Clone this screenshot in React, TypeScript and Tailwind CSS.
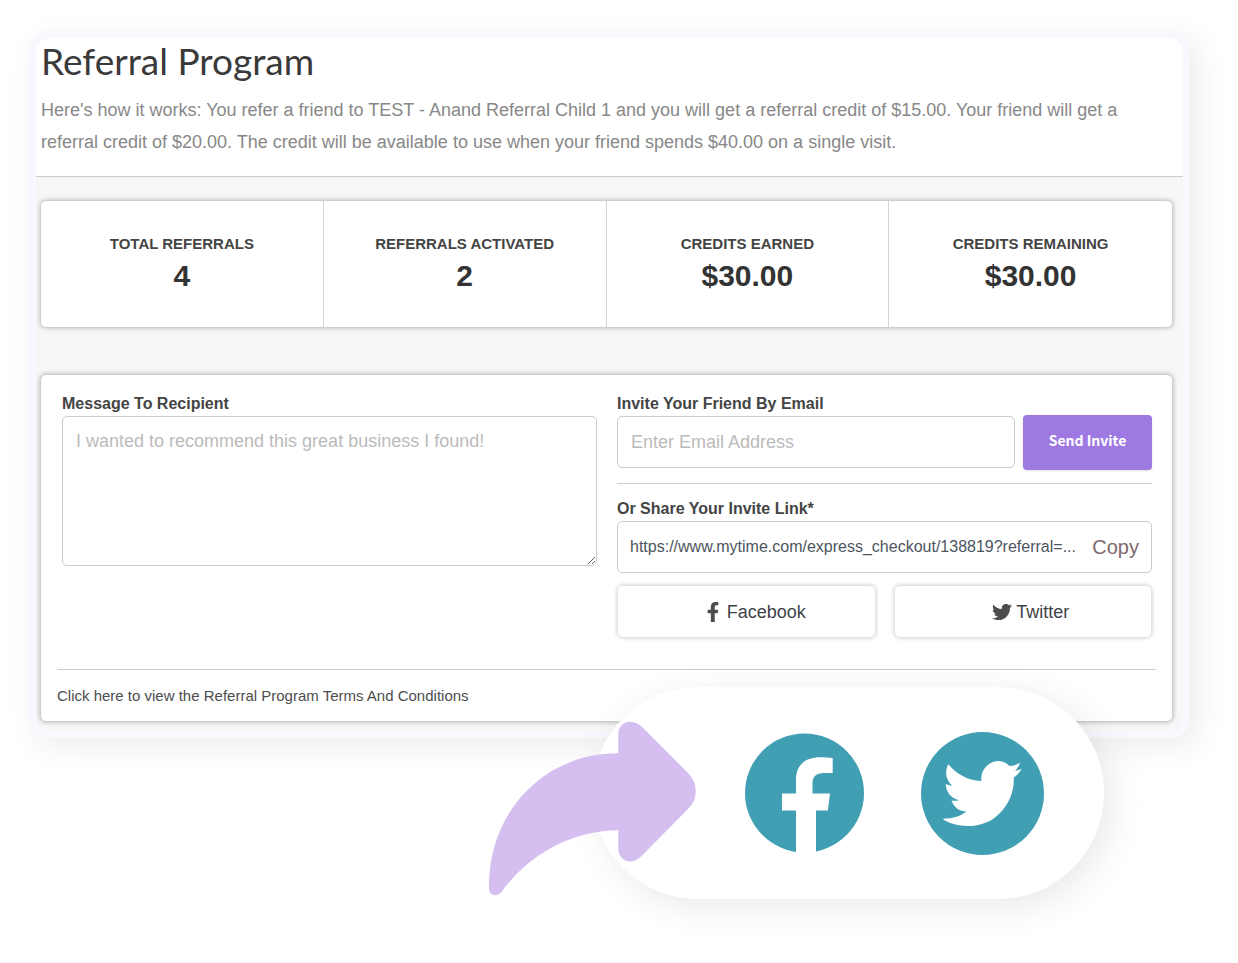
import { FaFacebookF, FaTwitter } from "react-icons/fa";

const stats = [
  { label: "TOTAL REFERRALS", value: "4" },
  { label: "REFERRALS ACTIVATED", value: "2" },
  { label: "CREDITS EARNED", value: "$30.00" },
  { label: "CREDITS REMAINING", value: "$30.00" },
];

const StatsCard = () => {
  return (
    <dl className="mt-[23px] mr-[10px] ml-1 grid grid-cols-4 divide-x divide-[#d4d4d4] rounded-md border border-[#cfcfcf] bg-white shadow-[0_0_5px_rgba(0,0,0,0.25)]">
      {stats.map((stat) => (
        <div
          key={stat.label}
          className="flex h-[126px] flex-col items-center pt-[31px] text-[#333333]"
        >
          <dt className="text-[15px] leading-6 font-bold text-[#444444]">
            {stat.label}
          </dt>
          <dd className="text-3xl leading-10 font-bold">{stat.value}</dd>
        </div>
      ))}
    </dl>
  );
};

const InviteCard = () => {
  return (
    <section className="mt-[46px] mr-[10px] mb-[9px] ml-1 rounded-md border border-[#cfcfcf] bg-white px-4 pt-[17px] pb-[13px] shadow-[0_0_5px_rgba(0,0,0,0.3)]">
      <div className="grid grid-cols-2 gap-5 pr-1 pl-[5px]">
        <div className="flex flex-col">
          <label
            htmlFor="message"
            className="text-base leading-6 font-bold text-[#444444]"
          >
            Message To Recipient
          </label>
          <textarea
            id="message"
            placeholder="I wanted to recommend this great business I found!"
            className="h-[150px] w-full resize rounded-[5px] border border-[#cccccc] px-[13px] py-3 text-lg leading-6 placeholder:text-[#bbbbbb]"
          />
        </div>
        <div className="flex flex-col">
          <label
            htmlFor="email"
            className="text-base leading-6 font-bold text-[#444444]"
          >
            Invite Your Friend By Email
          </label>
          <div className="flex h-[52px] items-center gap-2">
            <input
              id="email"
              type="email"
              placeholder="Enter Email Address"
              className="h-full min-w-0 flex-1 rounded-[5px] border border-[#cccccc] px-[13px] text-lg placeholder:text-[#bbbbbb]"
            />
            <button
              type="button"
              className="h-[55px] w-[129px] shrink-0 rounded bg-[#9e79e1] pb-1 font-['Noto_Sans_CJK_JP',sans-serif] text-sm font-bold text-white shadow-sm"
            >
              Send Invite
            </button>
          </div>
          <hr className="mt-[15px] border-[#cccccc]" />
          <label
            htmlFor="link"
            className="mt-[13px] text-base leading-6 font-bold text-[#444444]"
          >
            Or Share Your Invite Link*
          </label>
          <div className="flex h-[52px] items-center gap-4 rounded-[5px] border border-[#cccccc] px-3">
            <input
              id="link"
              readOnly
              value="https://www.mytime.com/express_checkout/138819?referral=..."
              className="min-w-0 flex-1 text-base text-[#4d5560]"
            />
            <button type="button" className="text-xl text-[#80686e]">
              Copy
            </button>
          </div>
          <div className="mt-3 grid grid-cols-2 gap-[18px]">
            <button
              type="button"
              className="flex h-[53px] items-center justify-center gap-1 rounded-md border border-[#e2e2e2] pl-4 text-lg text-[#3f4247] shadow-[0_0_4px_rgba(0,0,0,0.2)]"
            >
              <FaFacebookF className="text-[#4d4d4d]" size={20} />
              Facebook
            </button>
            <button
              type="button"
              className="flex h-[53px] items-center justify-center gap-1 rounded-md border border-[#e2e2e2] pl-4 text-lg text-[#3f4247] shadow-[0_0_4px_rgba(0,0,0,0.2)]"
            >
              <FaTwitter className="text-[#4d4d4d]" size={20} />
              Twitter
            </button>
          </div>
        </div>
      </div>
      <hr className="mt-[31px] mb-[14px] border-[#cccccc]" />
      <a href="#terms" className="block text-[15px] leading-6 text-[#4d4d4d]">
        Click here to view the Referral Program Terms And Conditions
      </a>
    </section>
  );
};

const FacebookBadge = () => {
  return (
    <svg width="119" height="120" viewBox="0 0 119 120" aria-hidden="true">
      <circle cx="59.5" cy="60" r="59.5" fill="#419fb4" />
      <path
        d="M51 120V77.500H37V60.500H51V46.500C51 31.500 61 24.300 75 24.300Q82 24.300 87.700 25V40H79C71 40 67.500 43.500 67.500 50.500V60.500H85L82.800 77.500H71V120Z"
        fill="#fff"
      />
    </svg>
  );
};

// Round bird logo, drawn a little narrower than the icon font's bird
const TwitterBadge = () => {
  return (
    <svg width="123" height="123" viewBox="0 0 123 123" aria-hidden="true">
      <circle cx="61.5" cy="61.5" r="61.5" fill="#419fb4" />
      <path
        d="M21.500 86.800C31 94.500 60 100 78 82C88 72.500 93.300 59.500 92.800 45.500Q98 42 100.800 36.800Q97 38.800 94 38.500Q98 35.500 99 30.500Q94 34 88.500 34C83 28 74 27.500 67.500 32.500C62 36.500 59.800 42.500 60.300 49C46 48.500 35 41.500 27.300 32.300C23.300 40 25 48.500 31.300 53.800Q28 53.800 24.800 52C25 60 30 66.300 38 68.300Q34 69.300 30.500 68.500C33 75.500 38.500 79.500 45.500 79.500Q36 87 21.500 86.800Z"
        fill="#fff"
      />
    </svg>
  );
};

const ShareBubble = () => {
  return (
    <div className="absolute right-[85px] -bottom-[161px] flex h-[212px] w-[512px] items-center justify-end gap-[57px] rounded-full bg-white pr-[60px] shadow-[8px_8px_36px_rgba(0,0,0,0.09)]">
      <FacebookBadge />
      <TwitterBadge />
      <svg
        className="absolute top-[33px] -left-[104px]"
        width="208"
        height="177"
        viewBox="0 0 208 177"
        aria-hidden="true"
      >
        <path
          d="M130.300 33.300V14C130.300 6 136 1.700 142 1.700C147 1.700 151 4 154.700 7.500L201 54Q207.700 61.500 207.700 71.500Q207.700 81 201 88L154 135.500C150 139.500 146 141.500 142 141.500C136 141.500 130.300 136 130.300 129V110.300C84 110.500 41 134 13 172.500Q10 175.500 6.500 175.300Q1 174.500 1 168C0 90 58 33 130.300 33.300Z"
          fill="#d3bcf0"
          fillOpacity="0.95"
        />
      </svg>
    </div>
  );
};

const App = () => {
  return (
    <main className="min-h-screen bg-white pt-[31px] pr-[49px] pb-[225px] pl-[29px] font-['Liberation_Sans',Arial,sans-serif]">
      <div className="relative rounded-[18px] bg-[#f8f8ff] p-[7px] pr-1.5 shadow-[8px_8px_32px_rgba(0,0,0,0.08)]">
        <div className="flow-root rounded-[14px] bg-[#f7f7f7]">
          <header className="rounded-t-[14px] border-b border-[#cccccc] bg-white px-[5px] pb-[18px]">
            <h1 className="font-['Lato',sans-serif] text-[37px] leading-[45px] text-[#3a3a3a]">
              Referral Program
            </h1>
            <p className="mt-[11px] text-lg leading-8 text-[#888888]">
              Here's how it works: You refer a friend to TEST - Anand Referral
              Child 1 and you will get a referral credit of $15.00. Your friend
              will get a referral credit of $20.00. The credit will be available
              to use when your friend spends $40.00 on a single visit.
            </p>
          </header>
          <StatsCard />
          <InviteCard />
        </div>
        <ShareBubble />
      </div>
    </main>
  );
};

export default App;
